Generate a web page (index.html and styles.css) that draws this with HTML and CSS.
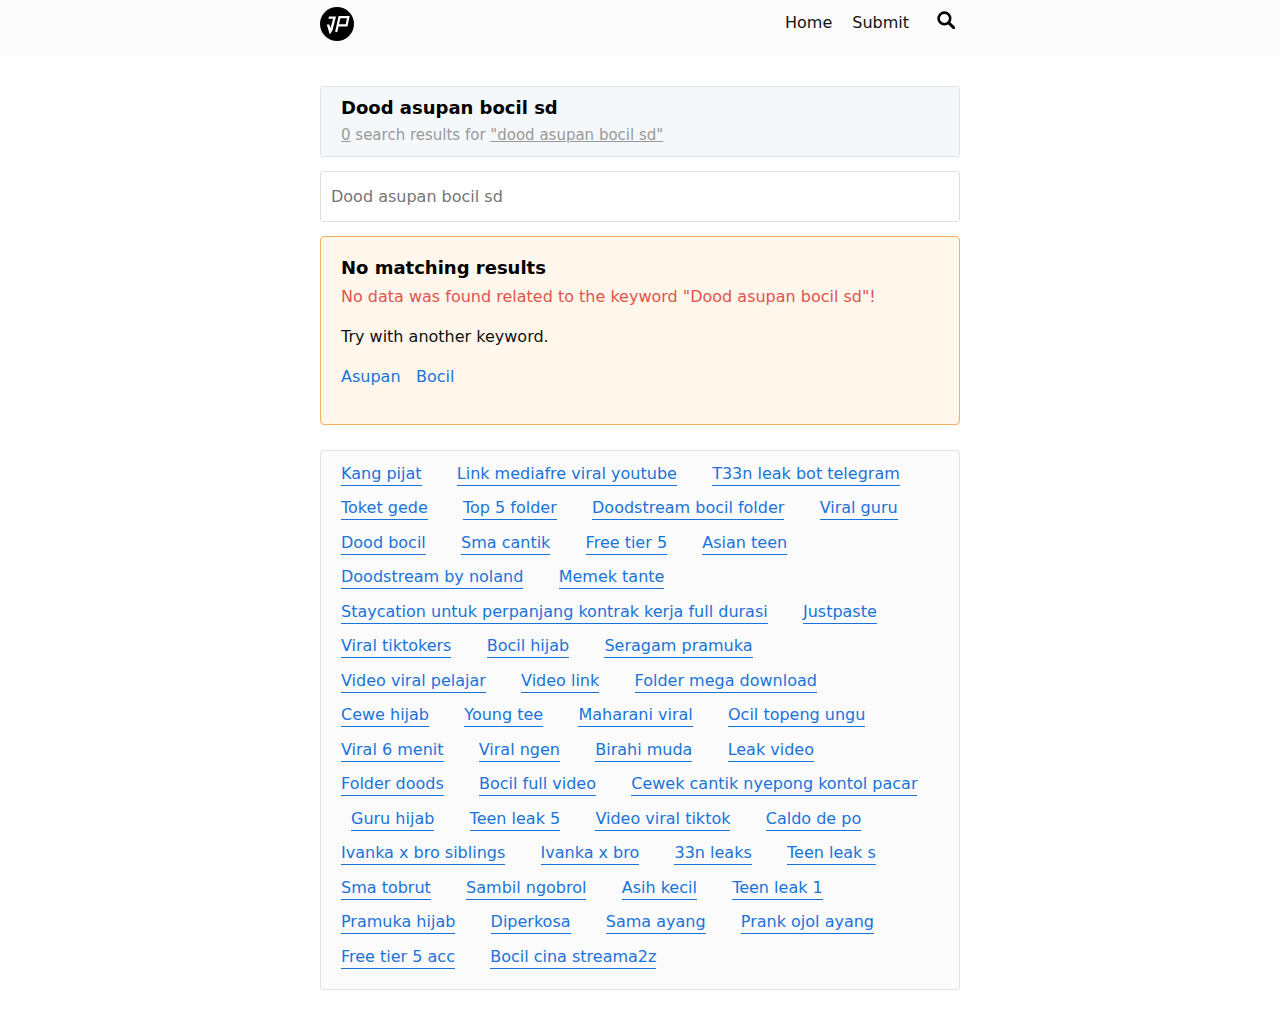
FILE: index.html
```html
<!DOCTYPE html>
<html lang="en">
<head>
<meta charset="utf-8">
<title>Dood asupan bocil sd</title>
<link rel="stylesheet" href="styles.css">
</head>
<body>
<header class="topbar">
  <div class="wrap topbar-inner">
    <a class="logo" href="#" aria-label="Logo">
      <svg width="34" height="34" viewBox="0 0 34 34"><circle cx="17" cy="17" r="17" fill="#000"/><path d="M18.500 10.200H28.300L26.600 18.300H18M19.600 9.800L16.200 25" fill="none" stroke="#fff" stroke-width="2.200"/><path d="M9 9.500H16L12.400 23.500L9.800 27.500L6.800 17.500H9.300L10.500 21L13.100 11.700H8.400z" fill="#fff"/></svg>
    </a>
    <nav class="nav">
      <a href="#">Home</a>
      <a href="#">Submit</a>
      <a class="search" href="#" aria-label="Search">
        <svg width="18" height="18" viewBox="0 0 18 18"><circle cx="7.400" cy="7.400" r="5.800" fill="none" stroke="#000" stroke-width="2.600"/><path d="M11.700 11.700l4.900 4.900" stroke="#000" stroke-width="2.900" stroke-linecap="round"/></svg>
      </a>
    </nav>
  </div>
</header>
<main class="wrap main">
  <section class="summary">
    <h1>Dood asupan bocil sd</h1>
    <p><u>0</u> search results for <u>"dood asupan bocil sd"</u></p>
  </section>
  <input class="searchbox" type="text" placeholder="Dood asupan bocil sd">
  <section class="notice">
    <h2>No matching results</h2>
    <p class="err">No data was found related to the keyword "Dood asupan bocil sd"!</p>
    <p class="try">Try with another keyword.</p>
    <p class="kw"><a href="#">Asupan</a><a href="#">Bocil</a></p>
  </section>
  <section class="tags">
    <a href="#">Kang pijat</a> <a href="#">Link mediafre viral youtube</a> <a href="#">T33n leak bot telegram</a> <a href="#">Toket gede</a> <a href="#">Top 5 folder</a> <a href="#">Doodstream bocil folder</a> <a href="#">Viral guru</a> <a href="#">Dood bocil</a> <a href="#">Sma cantik</a> <a href="#">Free tier 5</a> <a href="#">Asian teen</a> <a href="#">Doodstream by noland</a> <a href="#">Memek tante</a> <a href="#">Staycation untuk perpanjang kontrak kerja full durasi</a> <a href="#">Justpaste</a> <a href="#">Viral tiktokers</a> <a href="#">Bocil hijab</a> <a href="#">Seragam pramuka</a> <a href="#">Video viral pelajar</a> <a href="#">Video link</a> <a href="#">Folder mega download</a> <a href="#">Cewe hijab</a> <a href="#">Young tee</a> <a href="#">Maharani viral</a> <a href="#">Ocil topeng ungu</a> <a href="#">Viral 6 menit</a> <a href="#">Viral ngen</a> <a href="#">Birahi muda</a> <a href="#">Leak video</a> <a href="#">Folder doods</a> <a href="#">Bocil full video</a> <a href="#">Cewek cantik nyepong kontol pacar</a> <a class="indent" href="#">Guru hijab</a> <a href="#">Teen leak 5</a> <a href="#">Video viral tiktok</a> <a href="#">Caldo de po</a> <a href="#">Ivanka x bro siblings</a> <a href="#">Ivanka x bro</a> <a href="#">33n leaks</a> <a href="#">Teen leak s</a> <a href="#">Sma tobrut</a> <a href="#">Sambil ngobrol</a> <a href="#">Asih kecil</a> <a href="#">Teen leak 1</a> <a href="#">Pramuka hijab</a> <a href="#">Diperkosa</a> <a href="#">Sama ayang</a> <a href="#">Prank ojol ayang</a> <a href="#">Free tier 5 acc</a> <a href="#">Bocil cina streama2z</a>
  </section>
</main>
</body>
</html>
```
FILE: styles.css
```css
* { box-sizing: border-box; }
body { margin: 0; background: #fff; color: #111; font: 16px/24px "DejaVu Sans", sans-serif; }
a { color: #1a73d9; text-decoration: none; }
.wrap { width: 640px; margin: 0 auto; }
.topbar { height: 56px; background: #fbfbfb; }
.topbar-inner { height: 56px; display: flex; justify-content: space-between; }
.logo { display: block; margin-top: 7px; height: 34px; }
.logo svg { display: block; }
.nav { display: flex; gap: 20px; padding: 11px 5px 0 0; }
.nav a { color: #111; line-height: 24px; }
.nav .search { margin-left: 8px; }
.search svg { display: block; }
.main { padding-top: 30px; }
.summary { height: 71px; padding: 9px 20px; background: #f5f8fb; border: 1px solid #dfe2e6; border-radius: 3px; }
.summary h1 { margin: 0; font-size: 18px; line-height: 24px; font-weight: 700; color: #000; }
.summary p { margin: 3px 0 0; color: #999; font-size: 15px; }
.searchbox { display: block; width: 100%; height: 51px; margin-top: 14px; padding: 0 10px; border: 1px solid #dfe0e2; border-radius: 3px; background: #fff; font: 16px "DejaVu Sans", sans-serif; }
.searchbox::placeholder { color: #757575; opacity: 1; }
.notice { height: 189px; margin-top: 14px; padding: 19px 20px; background: #fff7ec; border: 1px solid #f2b05e; border-radius: 4px; }
.notice h2 { margin: 0; font-size: 18px; line-height: 24px; font-weight: 700; color: #000; }
.notice p { margin: 0; }
.notice .err { margin-top: 5px; color: #e2534a; }
.notice .try { margin-top: 16px; }
.notice .kw { margin-top: 16px; }
.kw a { margin-right: 15.5px; }
.tags { height: 540px; margin-top: 25px; padding: 5.7px 10px 6px 20px; background: #fbfbfb; border: 1px solid #e3e3e3; border-radius: 3px; line-height: 34.5px; }
.tags a { display: inline-block; line-height: 21px; margin-right: 30.15px; padding-bottom: 1px; border-bottom: 1px solid #1a73d9; }
.tags .indent { margin-left: 10px; }
```
